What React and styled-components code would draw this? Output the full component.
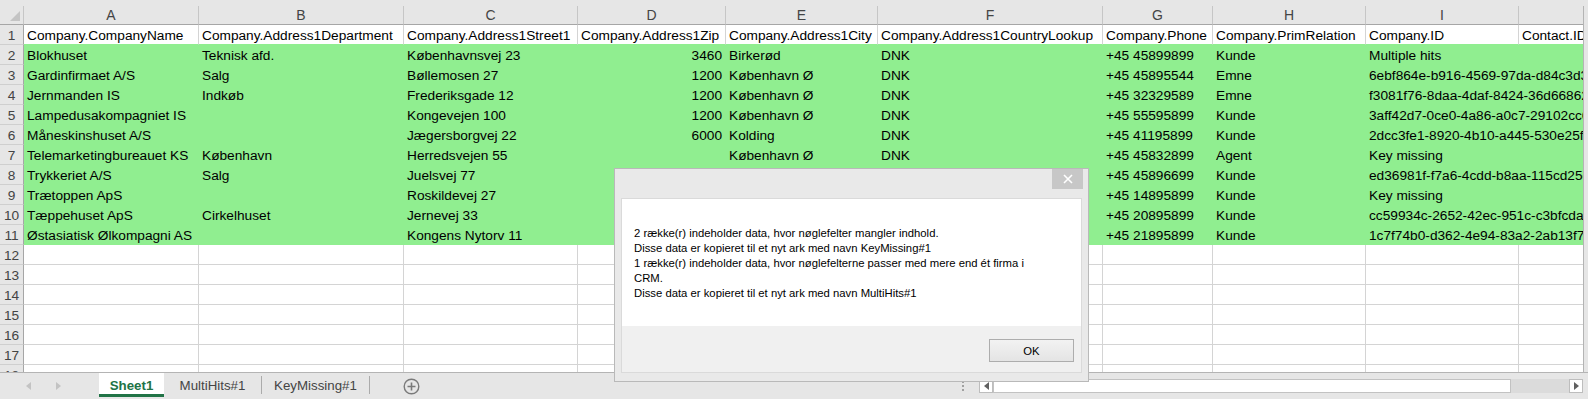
import React from "react";
import styled, { createGlobalStyle } from "styled-components";

const GREEN = "#90ee90";
const GRID = "#d4d4d4";
const HEAD_BG = "#e6e6e6";

const GlobalStyle = createGlobalStyle`
  html, body {
    margin: 0;
    padding: 0;
    background: ${HEAD_BG};
  }
  body {
    font-family: "Liberation Sans", Arial, sans-serif;
  }
`;

// widths in px, the right gridline is inside the width
const COLUMNS = [
  { letter: "A", width: 175 },
  { letter: "B", width: 205 },
  { letter: "C", width: 174 },
  { letter: "D", width: 148 },
  { letter: "E", width: 152 },
  { letter: "F", width: 225 },
  { letter: "G", width: 110 },
  { letter: "H", width: 153 },
  { letter: "I", width: 153 },
  { letter: "J", width: 150 },
];

const HEADER_ROW = [
  "Company.CompanyName",
  "Company.Address1Department",
  "Company.Address1Street1",
  "Company.Address1Zip",
  "Company.Address1City",
  "Company.Address1CountryLookup",
  "Company.Phone",
  "Company.PrimRelation",
  "Company.ID",
  "Contact.ID",
];

// rows 9-11 have D/E/F hidden behind the message box
const DATA = [
  ["Blokhuset", "Teknisk afd.", "Københavnsvej 23", "3460", "Birkerød", "DNK", "+45 45899899", "Kunde", "Multiple hits"],
  ["Gardinfirmaet A/S", "Salg", "Bøllemosen 27", "1200", "København Ø", "DNK", "+45 45895544", "Emne", "6ebf864e-b916-4569-97da-d84c3d3a9e21"],
  ["Jernmanden IS", "Indkøb", "Frederiksgade 12", "1200", "København Ø", "DNK", "+45 32329589", "Emne", "f3081f76-8daa-4daf-8424-36d66862c0b4"],
  ["Lampedusakompagniet IS", "", "Kongevejen 100", "1200", "København Ø", "DNK", "+45 55595899", "Kunde", "3aff42d7-0ce0-4a86-a0c7-29102cc68d17"],
  ["Måneskinshuset A/S", "", "Jægersborgvej 22", "6000", "Kolding", "DNK", "+45 41195899", "Kunde", "2dcc3fe1-8920-4b10-a445-530e25f3b6a9"],
  ["Telemarketingbureauet KS", "København", "Herredsvejen 55", "", "København Ø", "DNK", "+45 45832899", "Agent", "Key missing"],
  ["Trykkeriet A/S", "Salg", "Juelsvej 77", "", "København Ø", "DNK", "+45 45896699", "Kunde", "ed36981f-f7a6-4cdd-b8aa-115cd25c4e80"],
  ["Trætoppen ApS", "", "Roskildevej 27", "", "", "", "+45 14895899", "Kunde", "Key missing"],
  ["Tæppehuset ApS", "Cirkelhuset", "Jernevej 33", "", "", "", "+45 20895899", "Kunde", "cc59934c-2652-42ec-951c-c3bfcdaa6f12"],
  ["Østasiatisk Ølkompagni AS", "", "Kongens Nytorv 11", "", "", "", "+45 21895899", "Kunde", "1c7f74b0-d362-4e94-83a2-2ab13f77e5d3"],
];

const TOTAL_ROWS = 18;

const Window = styled.div`
  position: relative;
  width: 1588px;
  height: 399px;
  background: ${HEAD_BG};
  display: flex;
  flex-direction: column;
  overflow: hidden;
`;

const TopStrip = styled.div`
  flex: none;
  height: 6px;
`;

const Workspace = styled.div`
  flex: none;
  height: 366px;
  display: flex;
`;

const Sheet = styled.div`
  flex: none;
  width: 1583px;
  overflow: hidden;
  display: grid;
  grid-template-columns: 24px ${COLUMNS.map((c) => `${c.width}px`).join(" ")};
  grid-template-rows: 19px;
  grid-auto-rows: 20px;
  align-content: start;
  background: #fff;
`;

const ScrollEdge = styled.div`
  flex: 1;
  border-left: 1px solid #b4b4b4;
`;

const Corner = styled.div`
  box-sizing: border-box;
  background: ${HEAD_BG};
  border-right: 1px solid #c6c6c6;
  border-bottom: 1px solid #a6a6a6;
  display: flex;
  align-items: flex-end;
  justify-content: flex-end;
  padding: 0 3px 3px 0;
`;

const ColHead = styled.div`
  box-sizing: border-box;
  background: ${HEAD_BG};
  border-right: 1px solid #c6c6c6;
  border-bottom: 1px solid #a6a6a6;
  color: #444;
  font-size: 14px;
  line-height: 18px;
  text-align: center;
`;

const RowHead = styled.div`
  box-sizing: border-box;
  background: ${HEAD_BG};
  border-right: 1px solid #a6a6a6;
  border-bottom: 1px solid #cfcfcf;
  color: #444;
  font-size: 13.7px;
  line-height: 17px;
  padding-top: 2px;
  text-align: center;
`;

const Cell = styled.div`
  box-sizing: border-box;
  padding: 2px 3px 0;
  font-size: 13.7px;
  line-height: 17px;
  color: #000;
  white-space: nowrap;
  overflow: hidden;
  text-align: ${(p) => p.$align};
  background: ${(p) => (p.$green ? GREEN : "#fff")};
  border-right: 1px solid ${(p) => (p.$green ? GREEN : GRID)};
  border-bottom: 1px solid ${(p) => (p.$green || p.$greenBelow ? GREEN : GRID)};
  grid-column: ${(p) => (p.$span ? `span ${p.$span}` : "auto")};
`;

const BottomBar = styled.div`
  flex: 1;
  display: flex;
  align-items: stretch;
  border-top: 1px solid #b4b4b4;
`;

const NavArea = styled.div`
  flex: none;
  width: 99px;
  display: flex;
  align-items: center;
  gap: 23px;
  padding-left: 25px;
  box-sizing: border-box;
`;

const Tab = styled.div`
  flex: none;
  box-sizing: border-box;
  width: ${(p) => p.$width}px;
  height: 24px;
  display: flex;
  align-items: center;
  justify-content: center;
  font-size: 13.3px;
  color: ${(p) => (p.$active ? "#217346" : "#444")};
  font-weight: ${(p) => (p.$active ? 700 : 400)};
  background: ${(p) => (p.$active ? "#fff" : "transparent")};
  border-bottom: 3px solid ${(p) => (p.$active ? "#217346" : "transparent")};
  padding-top: 3px;
`;

const TabDivider = styled.div`
  flex: none;
  width: 1px;
  height: 18px;
  margin-top: 3px;
  background: #ababab;
`;

const AddSheet = styled.div`
  flex: none;
  margin-left: 33px;
  display: flex;
  align-items: center;
`;

const ScrollGroup = styled.div`
  flex: none;
  margin-left: auto;
  margin-right: 5px;
  width: 625px;
  display: flex;
  align-items: center;
`;

const Splitter = styled.div`
  flex: none;
  width: 21px;
  display: flex;
  flex-direction: column;
  align-items: flex-start;
  padding-left: 4px;
  box-sizing: border-box;
  gap: 2px;

  span {
    width: 2px;
    height: 2px;
    background: #a0a0a0;
  }
`;

const ArrowBox = styled.div`
  flex: none;
  box-sizing: border-box;
  width: 14px;
  height: 14px;
  background: #fff;
  border: 1px solid #bdbdbd;
  display: flex;
  align-items: center;
  justify-content: center;
`;

const Thumb = styled.div`
  flex: none;
  box-sizing: border-box;
  width: 518px;
  height: 14px;
  background: #fff;
  border: 1px solid #c2c2c2;
`;

const Track = styled.div`
  flex: 1;
  height: 14px;
  background: #dbdbdb;
`;

const Dialog = styled.div`
  position: absolute;
  left: 614px;
  top: 168px;
  width: 475px;
  height: 214px;
  box-sizing: border-box;
  background: #e9e9e9;
  border: 1px solid #b9b9b9;
  padding: 29px 6px 8px;
  display: flex;
  flex-direction: column;
  font-family: "Liberation Sans", Tahoma, sans-serif;
`;

const CloseButton = styled.div`
  position: absolute;
  top: 0;
  right: 5px;
  width: 31px;
  height: 20px;
  background: #c7c7c7;
  display: flex;
  align-items: center;
  justify-content: center;
`;

const DialogBody = styled.div`
  flex: 1;
  display: flex;
  flex-direction: column;
  border: 1px solid #dadada;
`;

const Message = styled.div`
  flex: none;
  height: 127px;
  box-sizing: border-box;
  background: #fff;
  padding: 27px 12px 0;
  font-size: 11.3px;
  line-height: 15px;
  color: #000;
`;

const ButtonRow = styled.div`
  flex: 1;
  background: #f0f0f0;
  display: flex;
  justify-content: flex-end;
  align-items: flex-start;
  padding: 13px 7px 0;
`;

const OkButton = styled.button`
  width: 85px;
  height: 23px;
  box-sizing: border-box;
  border: 1px solid #adadad;
  background: linear-gradient(#f2f2f2, #e4e4e4);
  font-family: "Liberation Sans", Tahoma, sans-serif;
  font-size: 11.3px;
  color: #000;
  padding: 0;
`;

const MESSAGE_LINES = [
  "2 række(r) indeholder data, hvor nøglefelter mangler indhold.",
  "Disse data er kopieret til et nyt ark med navn KeyMissing#1",
  "1 række(r) indeholder data, hvor nøglefelterne passer med mere end ét firma i",
  "CRM.",
  "Disse data er kopieret til et nyt ark med navn MultiHits#1",
];

function Triangle({ dir, color }) {
  const points = dir === "left" ? "6,0 6,8 1,4" : "1,0 1,8 6,4";
  return (
    <svg width="7" height="8" viewBox="0 0 7 8">
      <polygon points={points} fill={color} />
    </svg>
  );
}

function SheetGrid() {
  const cells = [];

  cells.push(
    <Corner key="corner">
      <svg width="10" height="10" viewBox="0 0 10 10">
        <polygon points="10,0 10,10 0,10" fill="#c4c4c4" />
      </svg>
    </Corner>
  );
  COLUMNS.forEach((c) => cells.push(<ColHead key={c.letter}>{c.letter}</ColHead>));

  for (let r = 1; r <= TOTAL_ROWS; r++) {
    cells.push(<RowHead key={`rh${r}`}>{r}</RowHead>);

    if (r === 1) {
      HEADER_ROW.forEach((text, i) => (
        cells.push(
          <Cell key={`c1-${i}`} $align="left" $greenBelow>
            {text}
          </Cell>
        )
      ));
      continue;
    }

    const row = DATA[r - 2];
    if (row) {
      // last value runs on into the empty J column
      row.forEach((text, i) => (
        cells.push(
          <Cell
            key={`c${r}-${i}`}
            $green
            $align={i === 3 ? "right" : "left"}
            $span={i === row.length - 1 ? 2 : 0}
          >
            {text}
          </Cell>
        )
      ));
    } else {
      COLUMNS.forEach((c) => cells.push(<Cell key={`c${r}-${c.letter}`} $align="left" />));
    }
  }

  return <Sheet>{cells}</Sheet>;
}

export default function App() {
  return (
    <>
      <GlobalStyle />
      <Window>
        <TopStrip />
        <Workspace>
          <SheetGrid />
          <ScrollEdge />
        </Workspace>
        <BottomBar>
          <NavArea>
            <Triangle dir="left" color="#c3c3c3" />
            <Triangle dir="right" color="#c3c3c3" />
          </NavArea>
          <Tab $width={65} $active>Sheet1</Tab>
          <Tab $width={97}>MultiHits#1</Tab>
          <TabDivider />
          <Tab $width={107}>KeyMissing#1</Tab>
          <TabDivider />
          <AddSheet>
            <svg width="17" height="17" viewBox="0 0 17 17">
              <circle cx="8.5" cy="8.5" r="7.3" fill="none" stroke="#7a7a7a" strokeWidth="1.4" />
              <path d="M8.5 4.5v8M4.5 8.5h8" stroke="#7a7a7a" strokeWidth="1.6" />
            </svg>
          </AddSheet>
          <ScrollGroup>
            <Splitter>
              <span />
              <span />
              <span />
            </Splitter>
            <ArrowBox>
              <Triangle dir="left" color="#606060" />
            </ArrowBox>
            <Thumb />
            <Track />
            <ArrowBox>
              <Triangle dir="right" color="#606060" />
            </ArrowBox>
          </ScrollGroup>
        </BottomBar>

        <Dialog>
          <CloseButton>
            <svg width="10" height="10" viewBox="0 0 10 10">
              <path d="M1 1l8 8M9 1l-8 8" stroke="#fff" strokeWidth="1.6" />
            </svg>
          </CloseButton>
          <DialogBody>
            <Message>
              {MESSAGE_LINES.map((line) => (
                <div key={line}>{line}</div>
              ))}
            </Message>
            <ButtonRow>
              <OkButton>OK</OkButton>
            </ButtonRow>
          </DialogBody>
        </Dialog>
      </Window>
    </>
  );
}
